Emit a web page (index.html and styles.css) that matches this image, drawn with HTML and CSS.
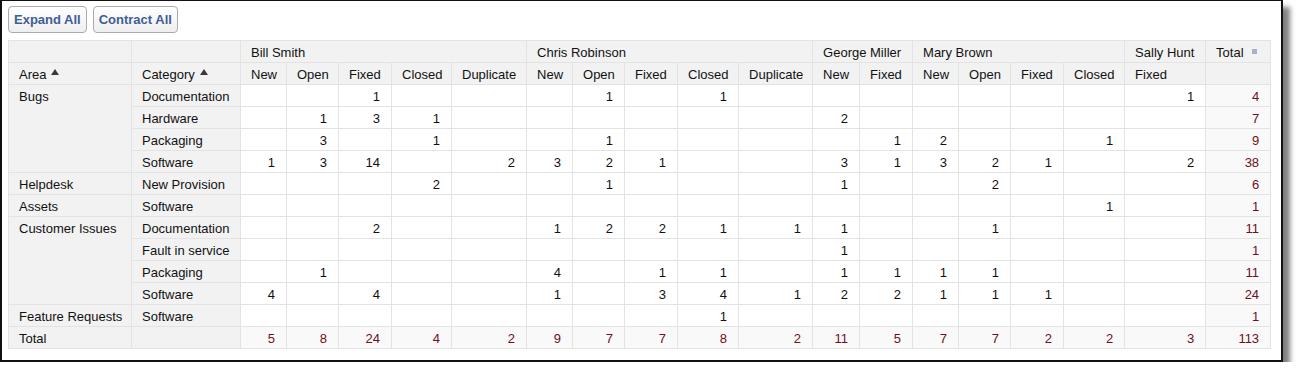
FILE: index.html
```html
<!DOCTYPE html>
<html>
<head>
<meta charset="utf-8">
<link rel="stylesheet" href="styles.css">
</head>
<body>
<div class="frame">
  <div class="toolbar">
    <button class="btn">Expand All</button>
    <button class="btn">Contract All</button>
  </div>
  <table class="pivot">
    <colgroup>
      <col class="c-area"><col class="c-cat">
      <col class="w46"><col class="w52"><col class="w53"><col class="w60"><col class="w75">
      <col class="w46"><col class="w52"><col class="w53"><col class="w61"><col class="w74">
      <col class="w47"><col class="w53">
      <col class="w46"><col class="w52"><col class="w53"><col class="w61">
      <col class="w81">
      <col class="w65">
    </colgroup>
    <thead>
      <tr>
        <th class="h"></th><th class="h"></th>
        <th class="h" colspan="5">Bill Smith</th>
        <th class="h" colspan="5">Chris Robinson</th>
        <th class="h" colspan="2">George Miller</th>
        <th class="h" colspan="4">Mary Brown</th>
        <th class="h">Sally Hunt</th>
        <th class="h">Total<span class="sq"></span></th>
      </tr>
      <tr>
        <th class="h">Area<span class="tri"></span></th>
        <th class="h">Category<span class="tri"></span></th>
        <th class="h">New</th><th class="h">Open</th><th class="h">Fixed</th><th class="h">Closed</th><th class="h">Duplicate</th>
        <th class="h">New</th><th class="h">Open</th><th class="h">Fixed</th><th class="h">Closed</th><th class="h">Duplicate</th>
        <th class="h">New</th><th class="h">Fixed</th>
        <th class="h">New</th><th class="h">Open</th><th class="h">Fixed</th><th class="h">Closed</th>
        <th class="h">Fixed</th>
        <th class="h"></th>
      </tr>
    </thead>
    <tbody>
      <tr>
        <th class="rh area" rowspan="4">Bugs</th><th class="rh">Documentation</th>
        <td></td><td></td><td>1</td><td></td><td></td>
        <td></td><td>1</td><td></td><td>1</td><td></td>
        <td></td><td></td>
        <td></td><td></td><td></td><td></td>
        <td>1</td>
        <td class="tot">4</td>
      </tr>
      <tr>
        <th class="rh">Hardware</th>
        <td></td><td>1</td><td>3</td><td>1</td><td></td>
        <td></td><td></td><td></td><td></td><td></td>
        <td>2</td><td></td>
        <td></td><td></td><td></td><td></td>
        <td></td>
        <td class="tot">7</td>
      </tr>
      <tr>
        <th class="rh">Packaging</th>
        <td></td><td>3</td><td></td><td>1</td><td></td>
        <td></td><td>1</td><td></td><td></td><td></td>
        <td></td><td>1</td>
        <td>2</td><td></td><td></td><td>1</td>
        <td></td>
        <td class="tot">9</td>
      </tr>
      <tr>
        <th class="rh">Software</th>
        <td>1</td><td>3</td><td>14</td><td></td><td>2</td>
        <td>3</td><td>2</td><td>1</td><td></td><td></td>
        <td>3</td><td>1</td>
        <td>3</td><td>2</td><td>1</td><td></td>
        <td>2</td>
        <td class="tot">38</td>
      </tr>
      <tr>
        <th class="rh area">Helpdesk</th><th class="rh">New Provision</th>
        <td></td><td></td><td></td><td>2</td><td></td>
        <td></td><td>1</td><td></td><td></td><td></td>
        <td>1</td><td></td>
        <td></td><td>2</td><td></td><td></td>
        <td></td>
        <td class="tot">6</td>
      </tr>
      <tr>
        <th class="rh area">Assets</th><th class="rh">Software</th>
        <td></td><td></td><td></td><td></td><td></td>
        <td></td><td></td><td></td><td></td><td></td>
        <td></td><td></td>
        <td></td><td></td><td></td><td>1</td>
        <td></td>
        <td class="tot">1</td>
      </tr>
      <tr>
        <th class="rh area" rowspan="4">Customer Issues</th><th class="rh">Documentation</th>
        <td></td><td></td><td>2</td><td></td><td></td>
        <td>1</td><td>2</td><td>2</td><td>1</td><td>1</td>
        <td>1</td><td></td>
        <td></td><td>1</td><td></td><td></td>
        <td></td>
        <td class="tot">11</td>
      </tr>
      <tr>
        <th class="rh">Fault in service</th>
        <td></td><td></td><td></td><td></td><td></td>
        <td></td><td></td><td></td><td></td><td></td>
        <td>1</td><td></td>
        <td></td><td></td><td></td><td></td>
        <td></td>
        <td class="tot">1</td>
      </tr>
      <tr>
        <th class="rh">Packaging</th>
        <td></td><td>1</td><td></td><td></td><td></td>
        <td>4</td><td></td><td>1</td><td>1</td><td></td>
        <td>1</td><td>1</td>
        <td>1</td><td>1</td><td></td><td></td>
        <td></td>
        <td class="tot">11</td>
      </tr>
      <tr>
        <th class="rh">Software</th>
        <td>4</td><td></td><td>4</td><td></td><td></td>
        <td>1</td><td></td><td>3</td><td>4</td><td>1</td>
        <td>2</td><td>2</td>
        <td>1</td><td>1</td><td>1</td><td></td>
        <td></td>
        <td class="tot">24</td>
      </tr>
      <tr>
        <th class="rh area">Feature Requests</th><th class="rh">Software</th>
        <td></td><td></td><td></td><td></td><td></td>
        <td></td><td></td><td></td><td>1</td><td></td>
        <td></td><td></td>
        <td></td><td></td><td></td><td></td>
        <td></td>
        <td class="tot">1</td>
      </tr>
      <tr class="total-row">
        <th class="rh area">Total</th><th class="rh"></th>
        <td>5</td><td>8</td><td>24</td><td>4</td><td>2</td>
        <td>9</td><td>7</td><td>7</td><td>8</td><td>2</td>
        <td>11</td><td>5</td>
        <td>7</td><td>7</td><td>2</td><td>2</td>
        <td>3</td>
        <td class="tot">113</td>
      </tr>
    </tbody>
  </table>
</div>
</body>
</html>
```

FILE: styles.css
```css
html, body {
  margin: 0;
  padding: 0;
  background: #ffffff;
}

body {
  font-family: "Liberation Sans", Arial, sans-serif;
  color: #111;
}

.frame {
  box-sizing: border-box;
  width: 1283px;
  height: 363px;
  margin-top: -1px;
  border: 2px solid #111;
  padding: 5px 0 0 6px;
  background: #fff;
  box-shadow: 7px 8px 5px rgba(0, 0, 0, 0.5);
}

.toolbar {
  display: flex;
  gap: 6px;
  margin-bottom: 7px;
}

.btn {
  font: bold 13px/15px "Liberation Sans", Arial, sans-serif;
  color: #3f5e95;
  padding: 5px 5px;
  border: 1px solid #ababab;
  border-radius: 4px;
  background: linear-gradient(#ffffff, #eeeeee);
  margin: 0;
}

.pivot {
  border-collapse: collapse;
  table-layout: fixed;
  width: 1262px;
  border: 1px solid #a4a4a4;
  font-size: 13px;
  line-height: 15px;
}

.c-area { width: 123px; }
.c-cat { width: 109px; }
.w46 { width: 46px; }
.w47 { width: 47px; }
.w52 { width: 52px; }
.w53 { width: 53px; }
.w60 { width: 60px; }
.w61 { width: 61px; }
.w65 { width: 65px; }
.w74 { width: 74px; }
.w75 { width: 75px; }
.w81 { width: 81px; }

.pivot tr {
  height: 22px;
}

.pivot th,
.pivot td {
  border: 1px solid #e3e3e3;
  padding: 1px 10px 0;
  height: 20px;
  white-space: nowrap;
  overflow: hidden;
}

.pivot th {
  font-weight: normal;
  text-align: left;
  color: #111;
}

.pivot th.h,
.pivot th.rh {
  background: #f2f2f2;
}

.pivot th.area {
  vertical-align: top;
  padding-top: 4px;
  height: 17px;
}

.pivot td {
  text-align: right;
  background: #fff;
  color: #111;
  padding-right: 11px;
}

.pivot td.tot {
  background: #f9f9f9;
  color: #6e0f22;
}

.total-row td {
  background: #f9f9f9;
  color: #6e0f22;
}

.tri {
  display: inline-block;
  width: 0;
  height: 0;
  border-left: 4px solid transparent;
  border-right: 4px solid transparent;
  border-bottom: 6px solid #3a3a3a;
  margin-left: 5px;
  vertical-align: 4px;
}

.sq {
  display: inline-block;
  width: 5px;
  height: 5px;
  background: #a9b0cc;
  margin-left: 8px;
  vertical-align: 3px;
}
```
